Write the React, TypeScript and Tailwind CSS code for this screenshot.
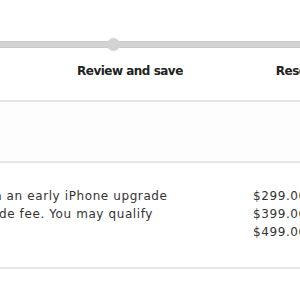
export default function App() {
  return (
    <div className="w-[300px] h-[300px] overflow-hidden bg-white text-[#222] font-['DejaVu_Sans',sans-serif]">
      {/* Progress bar */}
      <div className="pt-[41px]">
        <div className="relative h-[7px] bg-[#d3d3d3] border-y border-[#cbcbcb]">
          <div className="absolute left-[107px] top-[-4px] w-[13px] h-[13px] rounded-full bg-[#d3d3d3]" />
        </div>
      </div>

      {/* Step labels */}
      <div className="mt-[15px] flex h-[16px] items-center text-[12px] font-bold leading-[16px] tracking-[-0.5px] whitespace-nowrap">
        <span className="ml-[77px]">Review and save</span>
        <span className="ml-[93px]">Reserve</span>
      </div>

      <div className="mt-[21px] h-[2px] bg-[#e6e6e6]" />
      <div className="h-[59px] bg-[#fdfdfd]" />
      <div className="h-[2px] bg-[#e6e6e6]" />

      {/* Rows */}
      <div className="pt-[24px] flex text-[12px] leading-[18px] tracking-[0.6px] text-[#333] whitespace-nowrap">
        <div className="w-[253px] shrink-0 flex flex-col overflow-hidden">
          <span className="ml-[-6px]">n an early iPhone upgrade</span>
          <span className="ml-[-1px]">de fee. You may qualify</span>
        </div>
        <div className="flex flex-col">
          <span>$299.00</span>
          <span>$399.00</span>
          <span>$499.00</span>
        </div>
      </div>

      <div className="mt-[26px] h-[2px] bg-[#e6e6e6]" />
    </div>
  );
}
